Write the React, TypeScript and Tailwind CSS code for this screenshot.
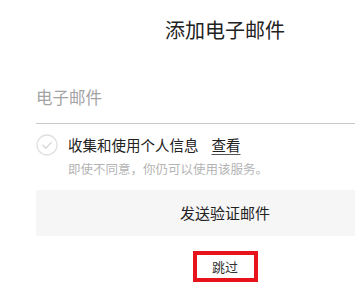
import React from 'react';

const font = { fontFamily: '"Noto Sans CJK SC", "Noto Sans", sans-serif' };

const CheckCircle: React.FC = () => (
  <svg width="22" height="22" viewBox="0 0 22 22" fill="none">
    <circle cx="11" cy="11" r="10" stroke="#e0e0e0" strokeWidth="1.3" />
    <path d="M6.8 11.3l3 2.9 5.6-5.8" stroke="#d6d6d6" strokeWidth="1.3" strokeLinecap="round" strokeLinejoin="round" />
  </svg>
);

const App: React.FC = () => {
  return (
    <div className="w-[355px] h-[292px] overflow-hidden bg-white" style={font}>
      <div className="pl-[36px]">
        <div className="w-[378px] flex flex-col">
          {/* Title */}
          <h1 className="h-[58px] flex items-center justify-center text-[20px] text-[#222] pt-[1px]">
            添加电子邮件
          </h1>

          {/* Email input */}
          <div className="h-[66px] flex items-end border-b border-[#c9c9c9]">
            <span className="text-[16.5px] text-[#a3a3a3] leading-none mb-[18px]">电子邮件</span>
          </div>

          {/* Consent */}
          <div className="flex gap-[10px] pt-[10px]">
            <CheckCircle />
            <div className="flex flex-col">
              <div className="flex items-center text-[14.5px] text-[#222] leading-[22px]">
                <span>收集和使用个人信息</span>
                <span className="ml-[13px] underline underline-offset-[3px] decoration-[#555]">查看</span>
              </div>
              <span className="mt-[3px] text-[12.5px] text-[#b4b4b4] leading-[20px]">即使不同意，你仍可以使用该服务。</span>
            </div>
          </div>

          {/* Send button */}
          <button className="mt-[11px] h-[46px] bg-[#f6f6f6] text-[15px] text-[#222] flex items-center justify-center">
            发送验证邮件
          </button>

          {/* Skip */}
          <div className="flex justify-center mt-[15px]">
            <div className="w-[65px] h-[31px] border-[4px] border-[#e8141c] flex items-center justify-center text-[13px] text-[#333]">
              跳过
            </div>
          </div>
        </div>
      </div>
    </div>
  );
};

export default App;
